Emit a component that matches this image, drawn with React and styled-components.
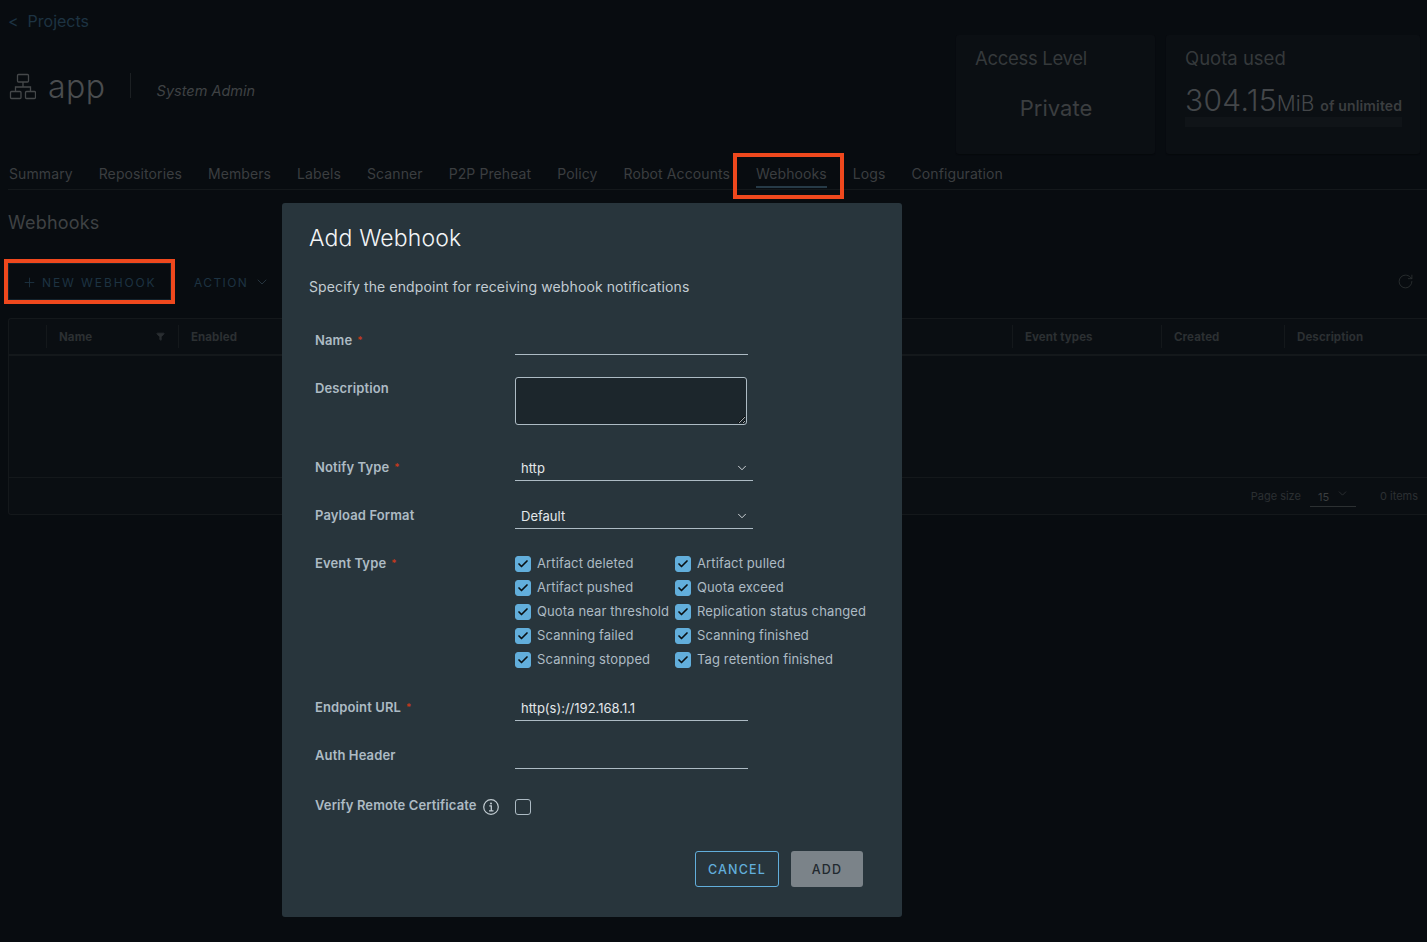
import styled, { createGlobalStyle } from "styled-components";
import { Check, ChevronDown, Filter, Plus, RotateCw } from "lucide-react";

const tabs = ["Summary", "Repositories", "Members", "Labels", "Scanner", "P2P Preheat", "Policy", "Robot Accounts", "Webhooks", "Logs", "Configuration"];
const events = [
    "Artifact deleted", "Artifact pulled",
    "Artifact pushed", "Quota exceed",
    "Quota near threshold", "Replication status changed",
    "Scanning failed", "Scanning finished",
    "Scanning stopped", "Tag retention finished",
];

export default function App() {
    return (
        <>
            <GlobalStyle />
            <Page>
                <Back><span>&lt;</span>Projects</Back>

                <Header>
                    <ProjectTitle>
                        <ProjectIcon />
                        <AppName>app</AppName>
                        <Role>System Admin</Role>
                    </ProjectTitle>
                    <Cards>
                        <Card $width={199}>
                            <CardTitle $spacing={-0.3}>Access Level</CardTitle>
                            <Private>Private</Private>
                        </Card>
                        <Card $width={254}>
                            <CardTitle>Quota used</CardTitle>
                            <Quota>304.15<small>MiB</small><em>of unlimited</em></Quota>
                            <QuotaBar />
                        </Card>
                    </Cards>
                </Header>

                <Tabs>
                    {tabs.map((t) => (
                        <Tab key={t}>
                            {t}
                            {t === "Webhooks" && <TabMark />}
                        </Tab>
                    ))}
                </Tabs>

                <Heading>Webhooks</Heading>

                <Toolbar>
                    <NewButton>
                        <Plus size={15} strokeWidth={1.4} />NEW WEBHOOK
                        <ButtonMark />
                    </NewButton>
                    <ActionButton>ACTION<ChevronDown size={16} strokeWidth={1.5} /></ActionButton>
                    <Refresh><RotateCw size={17} strokeWidth={1.2} /></Refresh>
                </Toolbar>

                <Table>
                    <TableHead>
                        <Cell />
                        <Cell>Name<Filter size={9} fill="#2a2e31" stroke="#2a2e31" /></Cell>
                        <Cell>Enabled</Cell>
                        <Cell />
                        <Cell>Event types</Cell>
                        <Cell>Created</Cell>
                        <Cell>Description</Cell>
                    </TableHead>
                    <TableBody />
                    <TableFoot>
                        Page size
                        <PageSize>15<ChevronDown size={13} strokeWidth={1.2} /></PageSize>
                        <span>0 items</span>
                    </TableFoot>
                </Table>

                <Modal>
                    <ModalTitle>Add Webhook</ModalTitle>
                    <ModalText>Specify the endpoint for receiving webhook notifications</ModalText>

                    <Form>
                        <Row $top={34}>
                            <Label $required>Name</Label>
                            <Line />
                        </Row>
                        <Row $top={22}>
                            <Label $shift={2}>Description</Label>
                            <TextArea />
                        </Row>
                        <Row $top={32}>
                            <Label $required $shift={1}>Notify Type</Label>
                            <Select>http<ChevronDown size={14} strokeWidth={1.5} /></Select>
                        </Row>
                        <Row $top={24}>
                            <Label $shift={1}>Payload Format</Label>
                            <Select>Default<ChevronDown size={14} strokeWidth={1.5} /></Select>
                        </Row>
                        <Row $top={25}>
                            <Label $required>Event Type</Label>
                            <Checks>
                                {events.map((e) => (
                                    <CheckItem key={e}>
                                        <CheckBox $checked><Check size={12} strokeWidth={3.4} color="#0b1114" /></CheckBox>
                                        {e}
                                    </CheckItem>
                                ))}
                            </Checks>
                        </Row>
                        <Row $top={26}>
                            <Label $required $shift={1}>Endpoint URL</Label>
                            <Line>http(s)://192.168.1.1</Line>
                        </Row>
                        <Row $top={24}>
                            <Label $shift={1}>Auth Header</Label>
                            <Line />
                        </Row>
                        <Row $top={30}>
                            <Label $shift={-3}>Verify Remote Certificate<InfoIcon /></Label>
                            <CheckBox />
                        </Row>
                    </Form>

                    <Actions>
                        <CancelButton>CANCEL</CancelButton>
                        <AddButton>ADD</AddButton>
                    </Actions>
                </Modal>
            </Page>
        </>
    );
}

const ProjectIcon = () => (
    <svg width="28" height="28" viewBox="0 0 28 28" fill="none" stroke="#45484a" strokeWidth="1.3">
        <rect x="9.5" y="1.5" width="11" height="7.5" rx="1" />
        <rect x="2.500" y="18.5" width="10.5" height="7" rx="1" />
        <rect x="17.500" y="18.5" width="10" height="7" rx="1" />
        <path d="M15 9V14M7.500 18.500V14H22.500V18.500" />
    </svg>
);

const InfoIcon = () => (
    <InfoSvg width="16" height="16" viewBox="0 0 16 16" fill="none" stroke="#c2ccd2" strokeWidth="1.2">
        <circle cx="8" cy="8" r="7.300" />
        <path d="M6.300 6.900H8.300V11.800M6 11.900H10.500" strokeWidth="1.3" />
        <circle cx="8" cy="4.400" r="1" fill="#c2ccd2" stroke="none" />
    </InfoSvg>
);

/** STYLING */

const font = `Inter, "Noto Sans", sans-serif`;

const GlobalStyle = createGlobalStyle`
    html, body {
        margin: 0;
        background: #080c10;
        font-family: ${font};
    }
    * {
        box-sizing: border-box;
    }
`;

const Page = styled.div`
    position: relative;
    width: 1427px;
    height: 942px;
    overflow: hidden;
    padding: 11px 0 0 8px;
    background: #080c10;
    color: #3f4244;
`;

const Back = styled.div`
    height: 21px;
    font-size: 16px;
    line-height: 20px;
    color: #1d3342;
    display: flex;
    gap: 9px;
`;

const Header = styled.div`
    display: flex;
    justify-content: space-between;
    align-items: flex-start;
    height: 119px;
    margin-top: 3px;
    padding-right: 7px;
`;

const ProjectTitle = styled.div`
    display: flex;
    align-items: center;
    height: 104px;
`;

const AppName = styled.span`
    font-size: 32px;
    font-weight: 300;
    line-height: 40px;
    letter-spacing: 0.5px;
    color: #4a4d4f;
    margin-left: 12px;
    padding-right: 51px;
    position: relative;
    &::after {
        content: "";
        position: absolute;
        right: 26px;
        top: 6px;
        height: 25px;
        width: 1px;
        background: #1c2023;
    }
`;

const Role = styled.span`
    margin-top: 6px;
    font-size: 14.500px;
    font-style: italic;
    color: #3f4244;
`;

const Cards = styled.div`
    display: flex;
    gap: 11px;
`;

const Card = styled.div`
    width: ${(p) => p.$width}px;
    height: 119px;
    padding: 13px 18px 13px 19px;
    background: #0b0f13;
    border-radius: 3px;
    box-shadow: 0 1px 1px #06090c;
`;

const CardTitle = styled.div`
    font-size: 18.500px;
    line-height: 21px;
    letter-spacing: ${(p) => p.$spacing || 0}px;
    color: #35393b;
`;

const Private = styled.div`
    margin-top: 25px;
    font-size: 22px;
    line-height: 28px;
    text-align: center;
    color: #3b3e40;
`;

const Quota = styled.div`
    height: 34px;
    margin-top: 14px;
    font-size: 30px;
    font-weight: 300;
    line-height: 34px;
    letter-spacing: 0.3px;
    color: #44474a;
    white-space: nowrap;
    small {
        font-size: 21px;
        letter-spacing: 0;
    }
    em {
        font-size: 14px;
        font-style: normal;
        font-weight: 600;
        letter-spacing: 0.15px;
        color: #3b3e40;
        margin-left: 6px;
    }
`;

const QuotaBar = styled.div`
    height: 10px;
    background: #101418;
`;

const Tabs = styled.div`
    display: flex;
    gap: 26px;
    height: 34px;
    margin-top: 2px;
    border-bottom: 1px solid #14181b;
    padding: 8px 0 0 1px;
`;

const Tab = styled.div`
    position: relative;
    font-size: 14px;
    line-height: 20px;
    letter-spacing: 0.1px;
    color: #3b3e40;
`;

const TabMark = styled.span`
    position: absolute;
    left: -23px;
    right: -17px;
    top: -11px;
    height: 46px;
    border: 4px solid #ef481d;
    &::after {
        content: "";
        position: absolute;
        left: 19px;
        right: 13px;
        bottom: 7px;
        height: 2px;
        background: #263a47;
    }
`;

const Heading = styled.h2`
    margin: 21px 0 0;
    font-size: 18px;
    line-height: 24px;
    font-weight: 400;
    letter-spacing: 0.2px;
    color: #3f4244;
`;

const Toolbar = styled.div`
    display: flex;
    align-items: center;
    height: 37px;
    margin-top: 28px;
    padding-right: 13px;
    font-size: 12px;
    line-height: 17px;
    letter-spacing: 1.4px;
    color: #1d3342;
`;

const NewButton = styled.div`
    position: relative;
    width: 163px;
    height: 37px;
    padding: 1px 0 0 13px;
    display: flex;
    align-items: center;
    gap: 5px;
    letter-spacing: 1.9px;
    border: 1px solid #12212b;
`;

const ButtonMark = styled.span`
    position: absolute;
    inset: -5px;
    border: 4px solid #ef481d;
`;

const ActionButton = styled.div`
    margin-left: 23px;
    padding-top: 1px;
    display: flex;
    align-items: center;
    gap: 6px;
    svg {
        color: #26343e;
        margin-top: -1px;
    }
`;

const Refresh = styled.div`
    margin-left: auto;
    display: flex;
    color: #2c3032;
`;

const Table = styled.div`
    margin-top: 18px;
    height: 197px;
    border: 1px solid #14181b;
    border-right: 0;
    border-radius: 3px 0 0 3px;
    background: #0a0e12;
`;

const TableHead = styled.div`
    display: grid;
    grid-template-columns: 37px 132px 834px 0 149px 123px 1fr;
    height: 37px;
    padding-top: 6px;
    border-bottom: 2px solid #14181b;
`;

const Cell = styled.div`
    display: flex;
    justify-content: space-between;
    align-items: center;
    height: 23px;
    padding: 0 13px 0 12px;
    border-left: 1px solid #14181b;
    font-size: 11.500px;
    font-weight: 700;
    letter-spacing: 0.1px;
    color: #2c3032;
    &:first-child {
        border-left: 0;
    }
    &:nth-child(4) {
        border: 0;
        padding: 0;
    }
`;

const TableBody = styled.div`
    height: 122px;
    border-bottom: 1px solid #14181b;
`;

const TableFoot = styled.div`
    display: flex;
    justify-content: flex-end;
    align-items: center;
    height: 35px;
    padding-right: 9px;
    font-size: 11px;
    color: #2c3032;
    span {
        margin-left: 24px;
    }
`;

const PageSize = styled.div`
    width: 46px;
    height: 22px;
    margin-left: 9px;
    padding: 5px 7px 0 8px;
    border-bottom: 1px solid #2c3032;
    display: flex;
    justify-content: space-between;
    color: #3b3e40;
    svg {
        margin-top: -3px;
    }
`;

const Modal = styled.div`
    position: absolute;
    left: 282px;
    top: 203px;
    width: 620px;
    height: 714px;
    padding: 21px 27px;
    background: #28353c;
    border-radius: 3px;
    color: #adbbc4;
`;

const ModalTitle = styled.h3`
    margin: 0;
    font-size: 23px;
    line-height: 28px;
    font-weight: 300;
    letter-spacing: 0.15px;
    color: #f2f4f6;
`;

const ModalText = styled.p`
    margin: 25px 0 0;
    font-size: 14px;
    line-height: 20px;
    letter-spacing: 0.11px;
    color: #c2ccd2;
`;

const Form = styled.div`
    display: flex;
    flex-direction: column;
    padding-left: 6px;
`;

const Row = styled.div`
    display: grid;
    grid-template-columns: 200px 1fr;
    margin-top: ${(p) => p.$top}px;
`;

const Label = styled.div`
    display: flex;
    align-items: flex-start;
    margin-top: ${(p) => p.$shift || 0}px;
    font-size: 13px;
    line-height: 18px;
    font-weight: 600;
    letter-spacing: 0.12px;
    white-space: nowrap;
    color: #adbbc4;
    ${(p) => p.$required && `
        &::after {
            content: "*";
            margin-left: 5px;
            font-size: 10px;
            color: #c4391d;
        }
    `}
`;

const Line = styled.div`
    width: 233px;
    height: 24px;
    padding-left: 6px;
    border-bottom: 1px solid #adbbc4;
    font-size: 13px;
    line-height: 22px;
    color: #e3e8eb;
`;

const TextArea = styled.textarea`
    display: block;
    width: 232px;
    height: 48px;
    background: #1c262c;
    border: 1px solid #adbbc4;
    border-radius: 3px;
    color-scheme: dark;
`;

const Select = styled.div`
    display: flex;
    justify-content: space-between;
    align-items: center;
    width: 238px;
    height: 24px;
    padding: 0 4px 2px 6px;
    border-bottom: 1px solid #adbbc4;
    font-size: 13px;
    color: #e3e8eb;
`;

const Checks = styled.div`
    display: grid;
    grid-template-columns: 160px 1fr;
    grid-auto-rows: 24px;
    margin-top: -3px;
`;

const CheckItem = styled.div`
    display: flex;
    align-items: center;
    gap: 6px;
    font-size: 13px;
    letter-spacing: 0.12px;
    white-space: nowrap;
    color: #adbbc4;
    > span {
        margin-top: 2px;
    }
`;

const CheckBox = styled.span`
    display: flex;
    align-items: center;
    justify-content: center;
    width: 16px;
    height: 16px;
    border-radius: 3px;
    border: 1px solid ${(p) => (p.$checked ? "#62aedb" : "#adbbc4")};
    background: ${(p) => (p.$checked ? "#62aedb" : "transparent")};
`;

const InfoSvg = styled.svg`
    margin: 3px 0 0 6px;
    flex: none;
`;

const Actions = styled.div`
    display: flex;
    justify-content: flex-end;
    gap: 12px;
    margin-top: 36px;
    padding-right: 12px;
`;

const CancelButton = styled.div`
    width: 84px;
    height: 36px;
    border: 1px solid #62aedb;
    border-radius: 3px;
    font-size: 12.500px;
    font-weight: 500;
    line-height: 35px;
    letter-spacing: 1.2px;
    text-align: center;
    color: #62aedb;
`;

const AddButton = styled.div`
    width: 72px;
    height: 36px;
    border-radius: 3px;
    background: #7b8389;
    font-size: 12.500px;
    font-weight: 500;
    line-height: 37px;
    letter-spacing: 1.2px;
    text-align: center;
    color: #22292f;
`;
